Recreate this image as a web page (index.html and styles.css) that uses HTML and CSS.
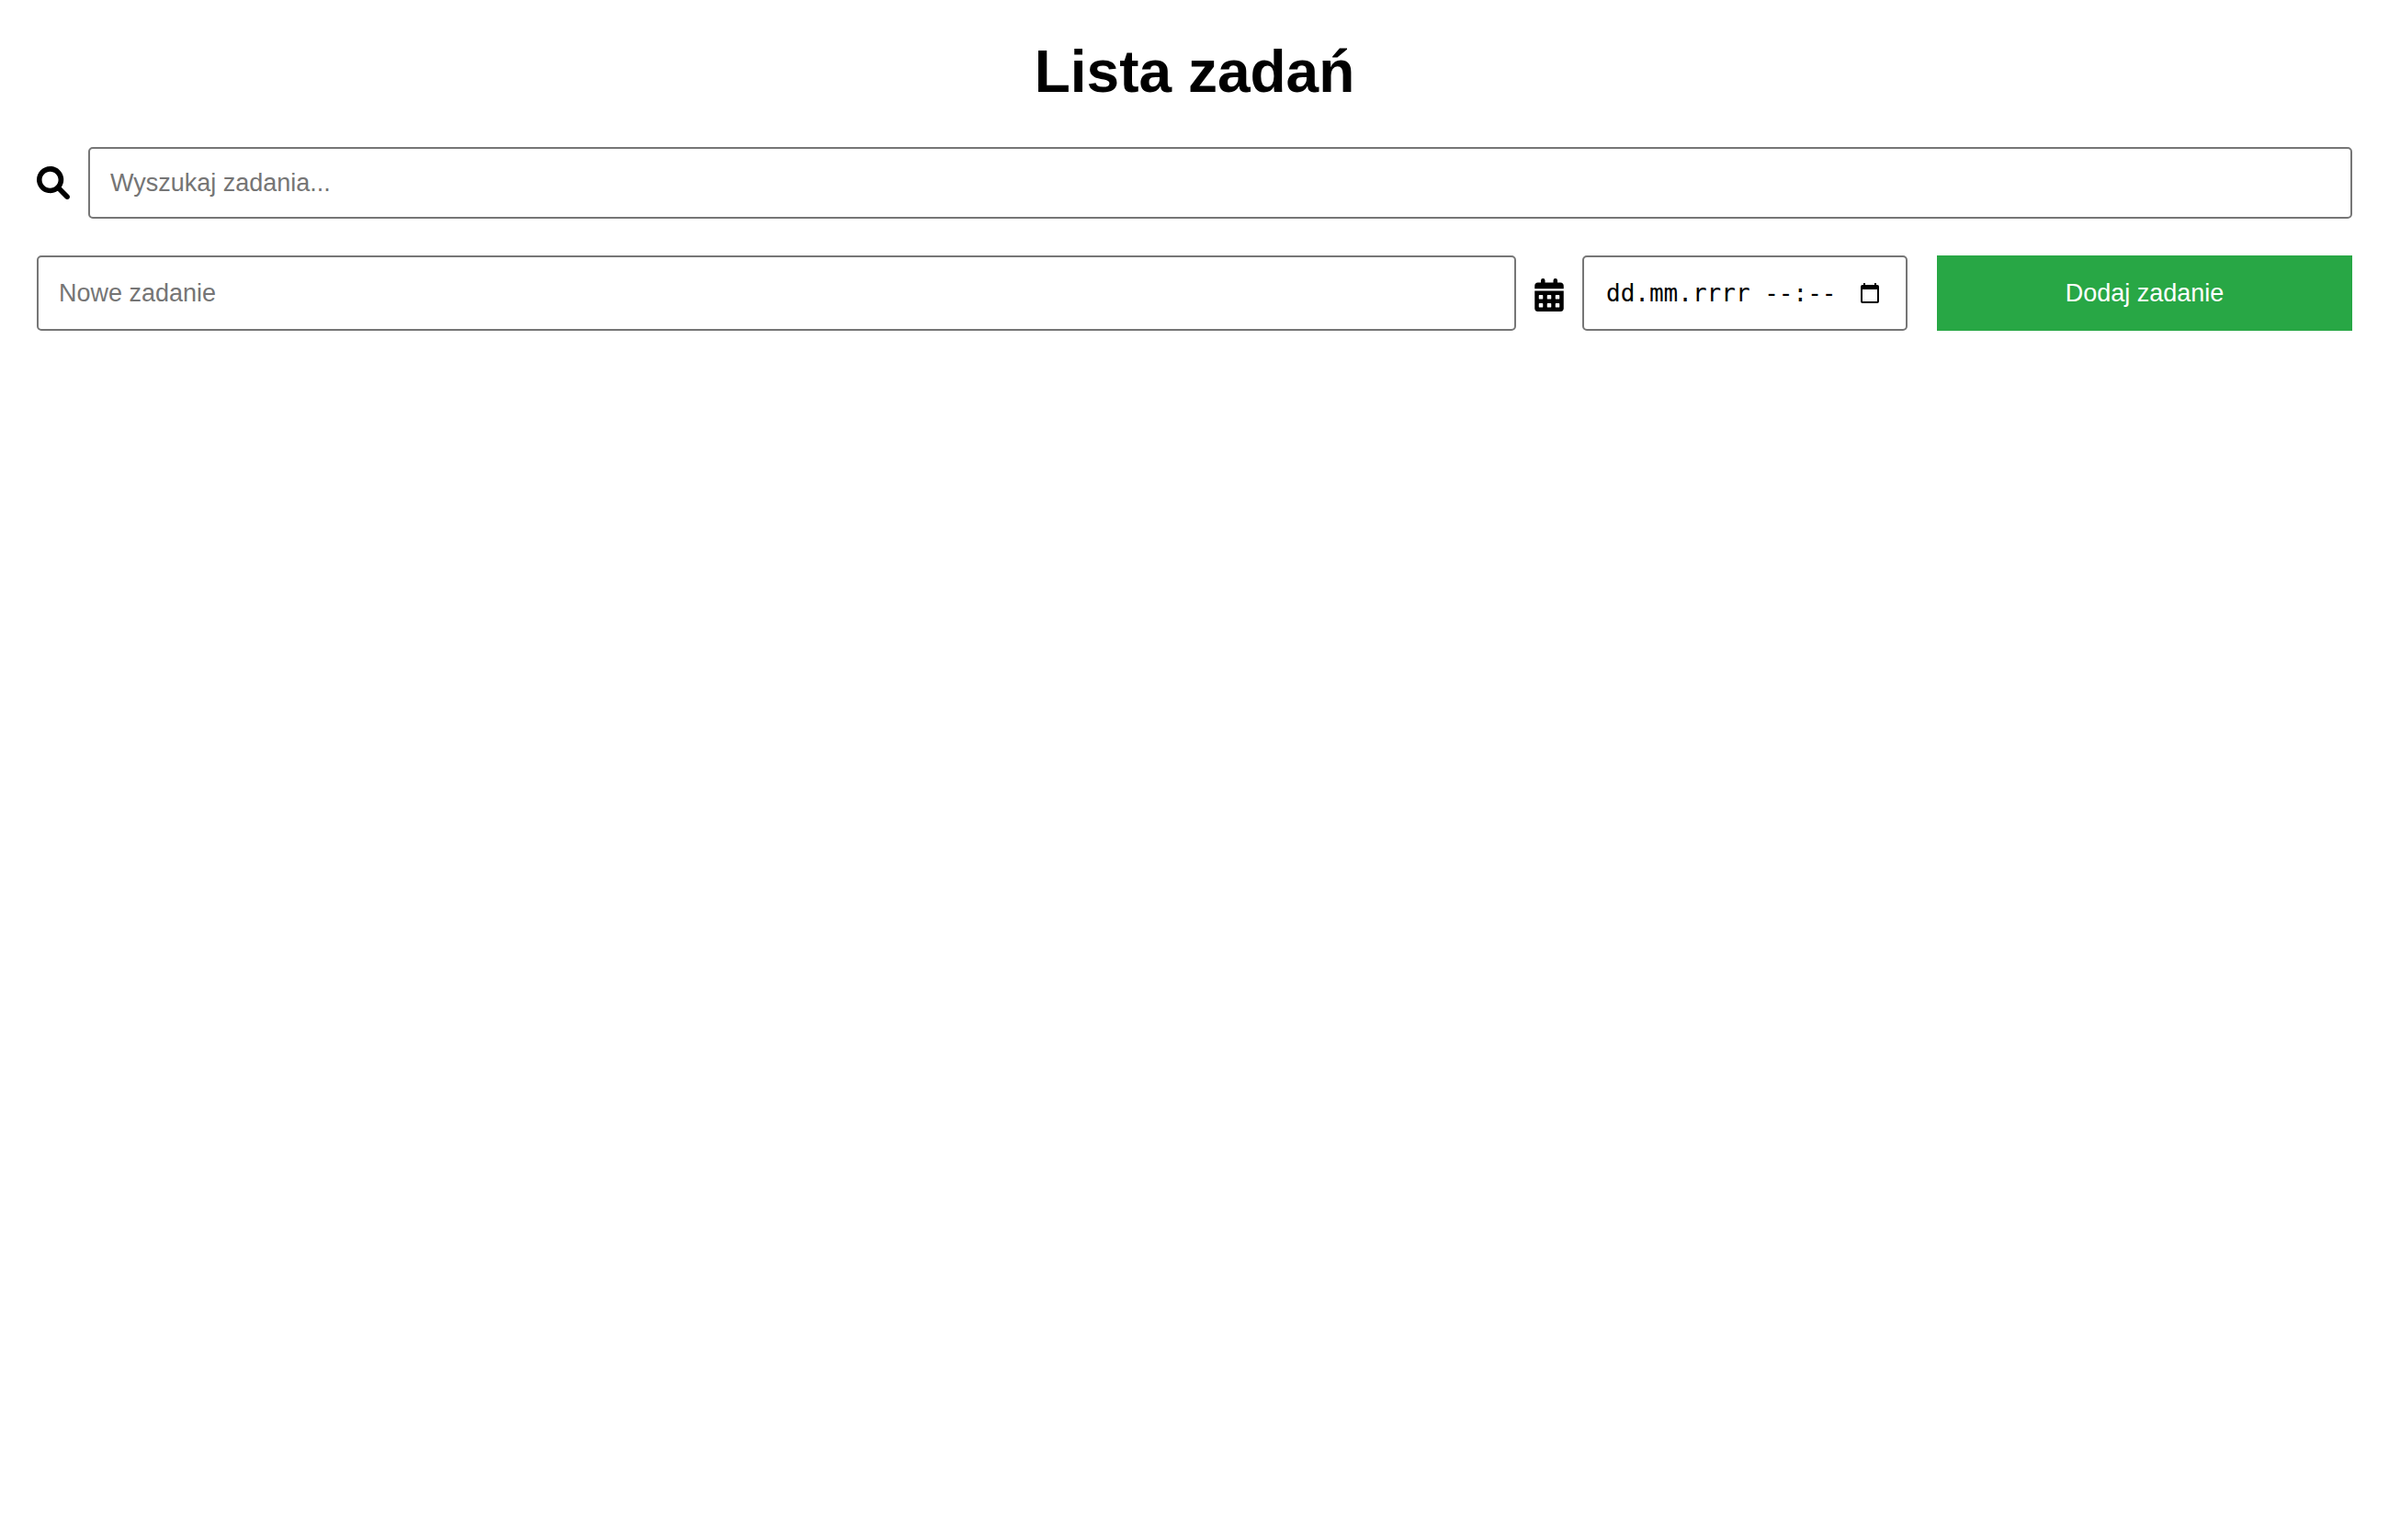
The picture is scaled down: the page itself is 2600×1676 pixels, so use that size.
FILE: index.html
```html
<!DOCTYPE html>
<html lang="pl">
<head>
<meta charset="utf-8">
<meta name="viewport" content="width=device-width, initial-scale=1">
<title>Lista zadań</title>
<link rel="stylesheet" href="styles.css">
</head>
<body>
<main class="page">
  <h1 class="title">Lista zadań</h1>
  <form class="search" role="search">
    <label class="icon-label" for="search" aria-label="Wyszukaj zadania">
      <svg class="icon" viewBox="0 0 512 512" aria-hidden="true"><path d="M500.3 443.7l-119.7-119.7c27.22-40.41 40.65-90.9 33.46-144.7C401.8 87.79 326.8 13.32 235.2 1.723C99.01-15.51-15.51 99.01 1.724 235.2c11.6 91.64 86.08 166.7 177.6 178.9c53.8 7.189 104.3-6.236 144.7-33.46l119.7 119.7c15.62 15.62 40.95 15.62 56.57 0C515.9 484.7 515.9 459.3 500.3 443.7zM79.1 208c0-70.58 57.42-128 128-128s128 57.42 128 128c0 70.58-57.42 128-128 128S79.1 278.6 79.1 208z"/></svg>
    </label>
    <input class="field" id="search" type="text" placeholder="Wyszukaj zadania...">
  </form>
  <form class="add">
    <input class="field" type="text" placeholder="Nowe zadanie" aria-label="Nowe zadanie">
    <label class="icon-label" for="due" aria-label="Termin">
      <svg class="icon icon-calendar" viewBox="0 0 448 512" aria-hidden="true"><path d="M0 464c0 26.500 21.500 48 48 48h352c26.500 0 48-21.500 48-48V192H0zM76 256h40a12 12 0 0 1 12 12v40a12 12 0 0 1-12 12H76a12 12 0 0 1-12-12v-40a12 12 0 0 1 12-12zm128 0h40a12 12 0 0 1 12 12v40a12 12 0 0 1-12 12h-40a12 12 0 0 1-12-12v-40a12 12 0 0 1 12-12zm128 0h40a12 12 0 0 1 12 12v40a12 12 0 0 1-12 12h-40a12 12 0 0 1-12-12v-40a12 12 0 0 1 12-12zM76 384h40a12 12 0 0 1 12 12v40a12 12 0 0 1-12 12H76a12 12 0 0 1-12-12v-40a12 12 0 0 1 12-12zm128 0h40a12 12 0 0 1 12 12v40a12 12 0 0 1-12 12h-40a12 12 0 0 1-12-12v-40a12 12 0 0 1 12-12zm128 0h40a12 12 0 0 1 12 12v40a12 12 0 0 1-12 12h-40a12 12 0 0 1-12-12v-40a12 12 0 0 1 12-12zM400 64h-48V32a32 32 0 0 0-64 0v32H160V32a32 32 0 0 0-64 0v32H48C21.500 64 0 85.500 0 112v48h448v-48c0-26.500-21.500-48-48-48z" fill-rule="evenodd"/></svg>
    </label>
    <div class="due">
      <input class="due-input" id="due" type="text" value="dd.mm.rrrr --:--">
      <button class="picker" type="button" aria-label="Wybierz datę">
        <svg class="picker-icon" viewBox="0 0 20 22" aria-hidden="true"><path d="M3 0h2v2h10V0h2v2h1a2 2 0 0 1 2 2v16a2 2 0 0 1-2 2H2a2 2 0 0 1-2-2V4a2 2 0 0 1 2-2h1zM2 7v13h16V7z" fill-rule="evenodd"/></svg>
      </button>
    </div>
    <button class="submit" type="submit">Dodaj zadanie</button>
  </form>
</main>
</body>
</html>
```
FILE: styles.css
```css
* {
  box-sizing: border-box;
}

body {
  margin: 0;
  background: #fff;
  color: #000;
  font-family: Arial, "Liberation Sans", sans-serif;
}

.page {
  padding: 40px;
}

.title {
  margin: 0 0 44px;
  font-size: 64px;
  line-height: 76px;
  text-align: center;
}

.search,
.add {
  display: flex;
  align-items: center;
}

.search {
  margin-bottom: 40px;
}

.search .icon-label {
  margin-right: 20px;
}

.icon-label {
  display: flex;
  flex: none;
}

.icon {
  width: 36px;
  height: 36px;
}

.icon-calendar {
  width: 32px;
}

.add .icon-label {
  margin: 4px 20px 0;
}

.field {
  flex: 1;
  min-width: 0;
  height: 78px;
  padding: 0 22px;
  border: 2px solid #767676;
  border-radius: 5px;
  background: #fff;
  font: 27px "Liberation Sans", Arial, sans-serif;
}

.field::placeholder {
  color: #757575;
}

.add .field,
.due,
.submit {
  height: 82px;
}

.due {
  display: flex;
  flex: none;
  align-items: center;
  justify-content: space-between;
  width: 354px;
  margin-right: 32px;
  padding: 0 29px 0 24px;
  border: 2px solid #767676;
  border-radius: 5px;
}

.due-input {
  width: 260px;
  padding: 0;
  border: 0;
  background: none;
  color: #000;
  font: 26px "DejaVu Sans Mono", monospace;
}

.picker {
  display: flex;
  padding: 0;
  border: 0;
  background: none;
}

.picker-icon {
  width: 20px;
  height: 22px;
}

.submit {
  flex: none;
  width: 452px;
  border: 0;
  background: #28a745;
  color: #fff;
  font: 27px "Liberation Sans", Arial, sans-serif;
}
```
